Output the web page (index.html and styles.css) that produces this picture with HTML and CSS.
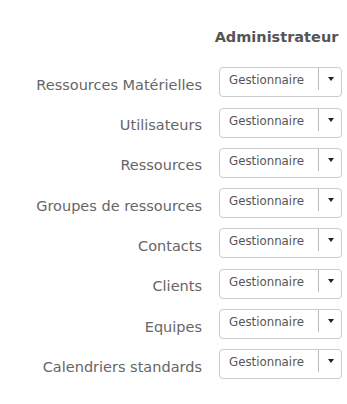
FILE: index.html
```html
<!DOCTYPE html>
<html>
<head>
<meta charset="utf-8">
<link rel="stylesheet" href="styles.css">
</head>
<body>
<div class="rights">
  <div class="head-spacer"></div>
  <div class="head">Administrateur</div>

  <div class="label">Ressources Matérielles</div>
  <div class="select"><span class="val">Gestionnaire</span><span class="btn"><span class="caret"></span></span></div>

  <div class="label">Utilisateurs</div>
  <div class="select"><span class="val">Gestionnaire</span><span class="btn"><span class="caret"></span></span></div>

  <div class="label">Ressources</div>
  <div class="select"><span class="val">Gestionnaire</span><span class="btn"><span class="caret"></span></span></div>

  <div class="label">Groupes de ressources</div>
  <div class="select"><span class="val">Gestionnaire</span><span class="btn"><span class="caret"></span></span></div>

  <div class="label">Contacts</div>
  <div class="select"><span class="val">Gestionnaire</span><span class="btn"><span class="caret"></span></span></div>

  <div class="label">Clients</div>
  <div class="select"><span class="val">Gestionnaire</span><span class="btn"><span class="caret"></span></span></div>

  <div class="label">Equipes</div>
  <div class="select"><span class="val">Gestionnaire</span><span class="btn"><span class="caret"></span></span></div>

  <div class="label">Calendriers standards</div>
  <div class="select"><span class="val">Gestionnaire</span><span class="btn"><span class="caret"></span></span></div>
</div>
</body>
</html>
```
FILE: styles.css
```css
html, body {
  margin: 0;
  padding: 0;
  background: #fff;
}
body {
  font-family: "DejaVu Sans", Verdana, sans-serif;
  color: #666;
}
.rights {
  display: grid;
  grid-template-columns: 202px 123px;
  column-gap: 17px;
  row-gap: 10.3px;
  align-items: center;
  padding-top: 28px;
}
.head {
  font-weight: bold;
  font-size: 14.5px;
  line-height: 18px;
  color: #555;
  text-align: center;
  margin-bottom: 11px;
  margin-left: -8px;
}
.label {
  text-align: right;
  font-size: 14.5px;
  line-height: 18px;
  color: #666;
  white-space: nowrap;
  padding-top: 5px;
}
.select {
  box-sizing: border-box;
  height: 30px;
  border: 1px solid #ccc;
  border-radius: 4px;
  display: flex;
  align-items: flex-start;
}
.val {
  flex: 1;
  font-size: 11.8px;
  line-height: 15px;
  color: #555;
  padding-left: 9px;
  padding-top: 5px;
}
.btn {
  width: 23px;
  height: 22px;
  margin-top: 0;
  border-left: 1px solid #bbb;
  display: flex;
  justify-content: center;
  align-items: flex-start;
  padding-top: 9px;
  box-sizing: border-box;
}
.caret {
  width: 0;
  height: 0;
  border-left: 3px solid transparent;
  border-right: 3px solid transparent;
  border-top: 4px solid #222;
  margin-left: 2px;
}
```
